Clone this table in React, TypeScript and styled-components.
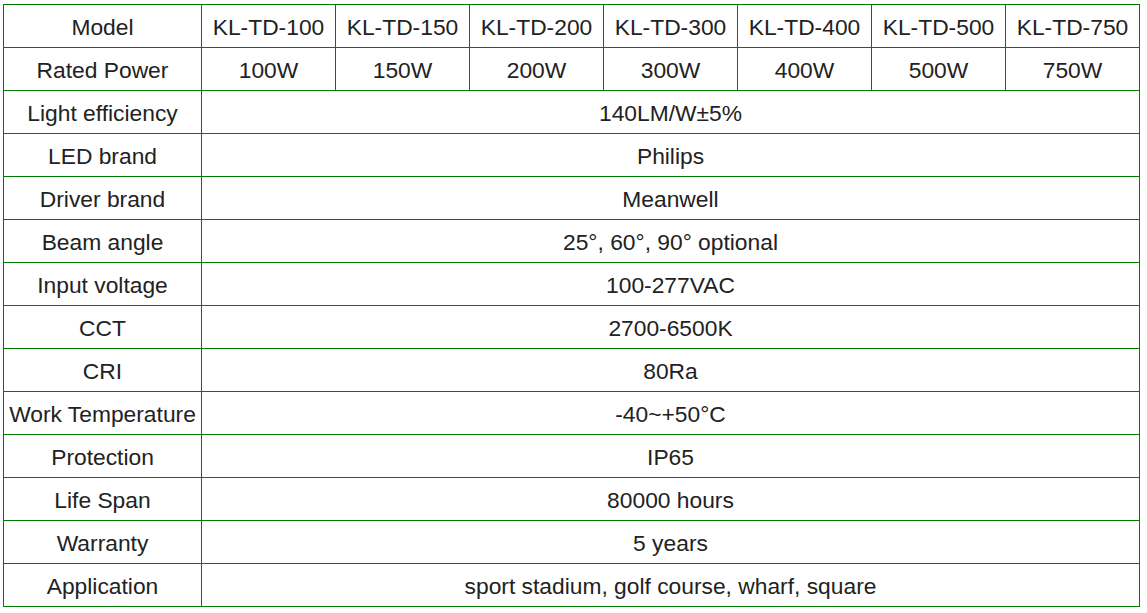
import React from "react";
import styled, { createGlobalStyle } from "styled-components";

const GlobalStyle = createGlobalStyle`
  html, body {
    margin: 0;
    padding: 0;
    background: #ffffff;
  }
  body {
    font-family: "Liberation Sans", Arial, sans-serif;
  }
`;

const Page = styled.div`
  padding: 4px 0 0 3px;
`;

const Grid = styled.div`
  display: grid;
  grid-template-columns: 198px repeat(7, 134px);
  grid-auto-rows: 43px;
  width: 1137px;
  box-sizing: border-box;
  border-left: 1px solid #007a00;
  border-top: 1px solid #007a00;
`;

const Cell = styled.div<{ $span?: number }>`
  grid-column: span ${({ $span }) => $span || 1};
  box-sizing: border-box;
  border-right: 1px solid #007a00;
  border-bottom: 1px solid #007a00;
  padding-top: 2px;
  display: flex;
  align-items: center;
  justify-content: center;
  font-size: 22.8px;
  color: #222222;
  white-space: nowrap;
  overflow: hidden;
`;

const models = ["100", "150", "200", "300", "400", "500", "750"];

const specs: [string, string][] = [
  ["Light efficiency", "140LM/W±5%"],
  ["LED brand", "Philips"],
  ["Driver brand", "Meanwell"],
  ["Beam angle", "25°, 60°, 90° optional"],
  ["Input voltage", "100-277VAC"],
  ["CCT", "2700-6500K"],
  ["CRI", "80Ra"],
  ["Work Temperature", "-40~+50°C"],
  ["Protection", "IP65"],
  ["Life Span", "80000 hours"],
  ["Warranty", "5 years"],
  ["Application", "sport stadium, golf course, wharf, square"],
];

export default function App() {
  return (
    <Page>
      <GlobalStyle />
      <Grid>
        <Cell>Model</Cell>
        {models.map((m) => (
          <Cell key={"m" + m}>KL-TD-{m}</Cell>
        ))}
        <Cell>Rated Power</Cell>
        {models.map((m) => (
          <Cell key={"p" + m}>{m}W</Cell>
        ))}
        {specs.map(([label, value]) => (
          <React.Fragment key={label}>
            <Cell>{label}</Cell>
            <Cell $span={7}>{value}</Cell>
          </React.Fragment>
        ))}
      </Grid>
    </Page>
  );
}
